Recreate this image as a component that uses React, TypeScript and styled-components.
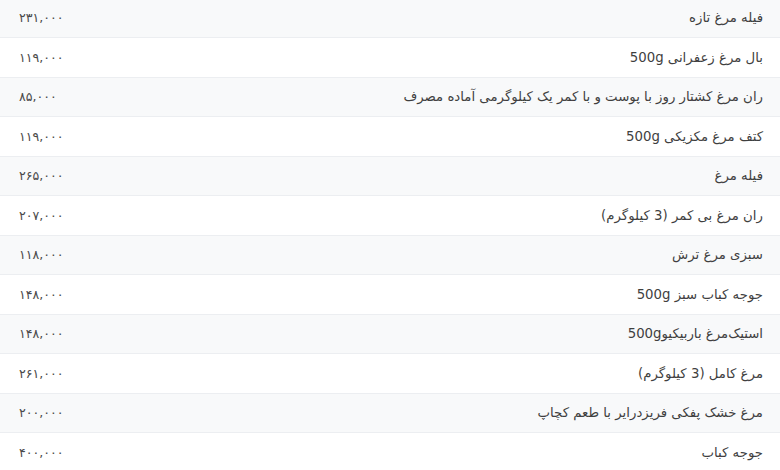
import React from "react";
import styled, { createGlobalStyle } from "styled-components";

const Global = createGlobalStyle`
  html, body { margin: 0; padding: 0; background: #ffffff; }
  body { font-family: "DejaVu Sans", "Noto Sans", sans-serif; overflow: hidden; }
`;

const Table = styled.div`
  width: 780px;
  margin-top: -2.5px;
  display: flex;
  flex-direction: column;
`;

const Row = styled.div<{ $striped: boolean }>`
  height: 39.5px;
  box-sizing: border-box;
  border-top: 1px solid #eceef1;
  background: ${(p) => (p.$striped ? "#f8f9fa" : "#ffffff")};
  display: flex;
  align-items: center;
  justify-content: space-between;
  padding: 0 17px 0 19px;
`;

const Price = styled.span`
  direction: rtl;
  font-size: 12.6px;
  color: #4a4a4a;
`;

const Name = styled.span`
  direction: rtl;
  font-size: 13.3px;
  color: #3f3f3f;
`;

const items: [string, string][] = [
  ["فیله مرغ تازه", "۲۳۱,۰۰۰"],
  ["بال مرغ زعفرانی 500g", "۱۱۹,۰۰۰"],
  ["ران مرغ کشتار روز با پوست و با کمر یک کیلوگرمی آماده مصرف", "۸۵,۰۰۰"],
  ["کتف مرغ مکزیکی 500g", "۱۱۹,۰۰۰"],
  ["فیله مرغ", "۲۶۵,۰۰۰"],
  ["ران مرغ بی کمر (3 کیلوگرم)", "۲۰۷,۰۰۰"],
  ["سبزی مرغ ترش", "۱۱۸,۰۰۰"],
  ["جوجه کباب سبز 500g", "۱۴۸,۰۰۰"],
  ["استیک‌مرغ باربیکیو500g", "۱۴۸,۰۰۰"],
  ["مرغ کامل (3 کیلوگرم)", "۲۶۱,۰۰۰"],
  ["مرغ خشک پفکی فریزدرایر با طعم کچاپ", "۲۰۰,۰۰۰"],
  ["جوجه کباب", "۴۰۰,۰۰۰"],
];

export default function App() {
  return (
    <>
      <Global />
      <Table>
        {items.map(([name, price], i) => (
          <Row key={i} $striped={i % 2 === 0}>
            <Price>{price}</Price>
            <Name>{name}</Name>
          </Row>
        ))}
      </Table>
    </>
  );
}
